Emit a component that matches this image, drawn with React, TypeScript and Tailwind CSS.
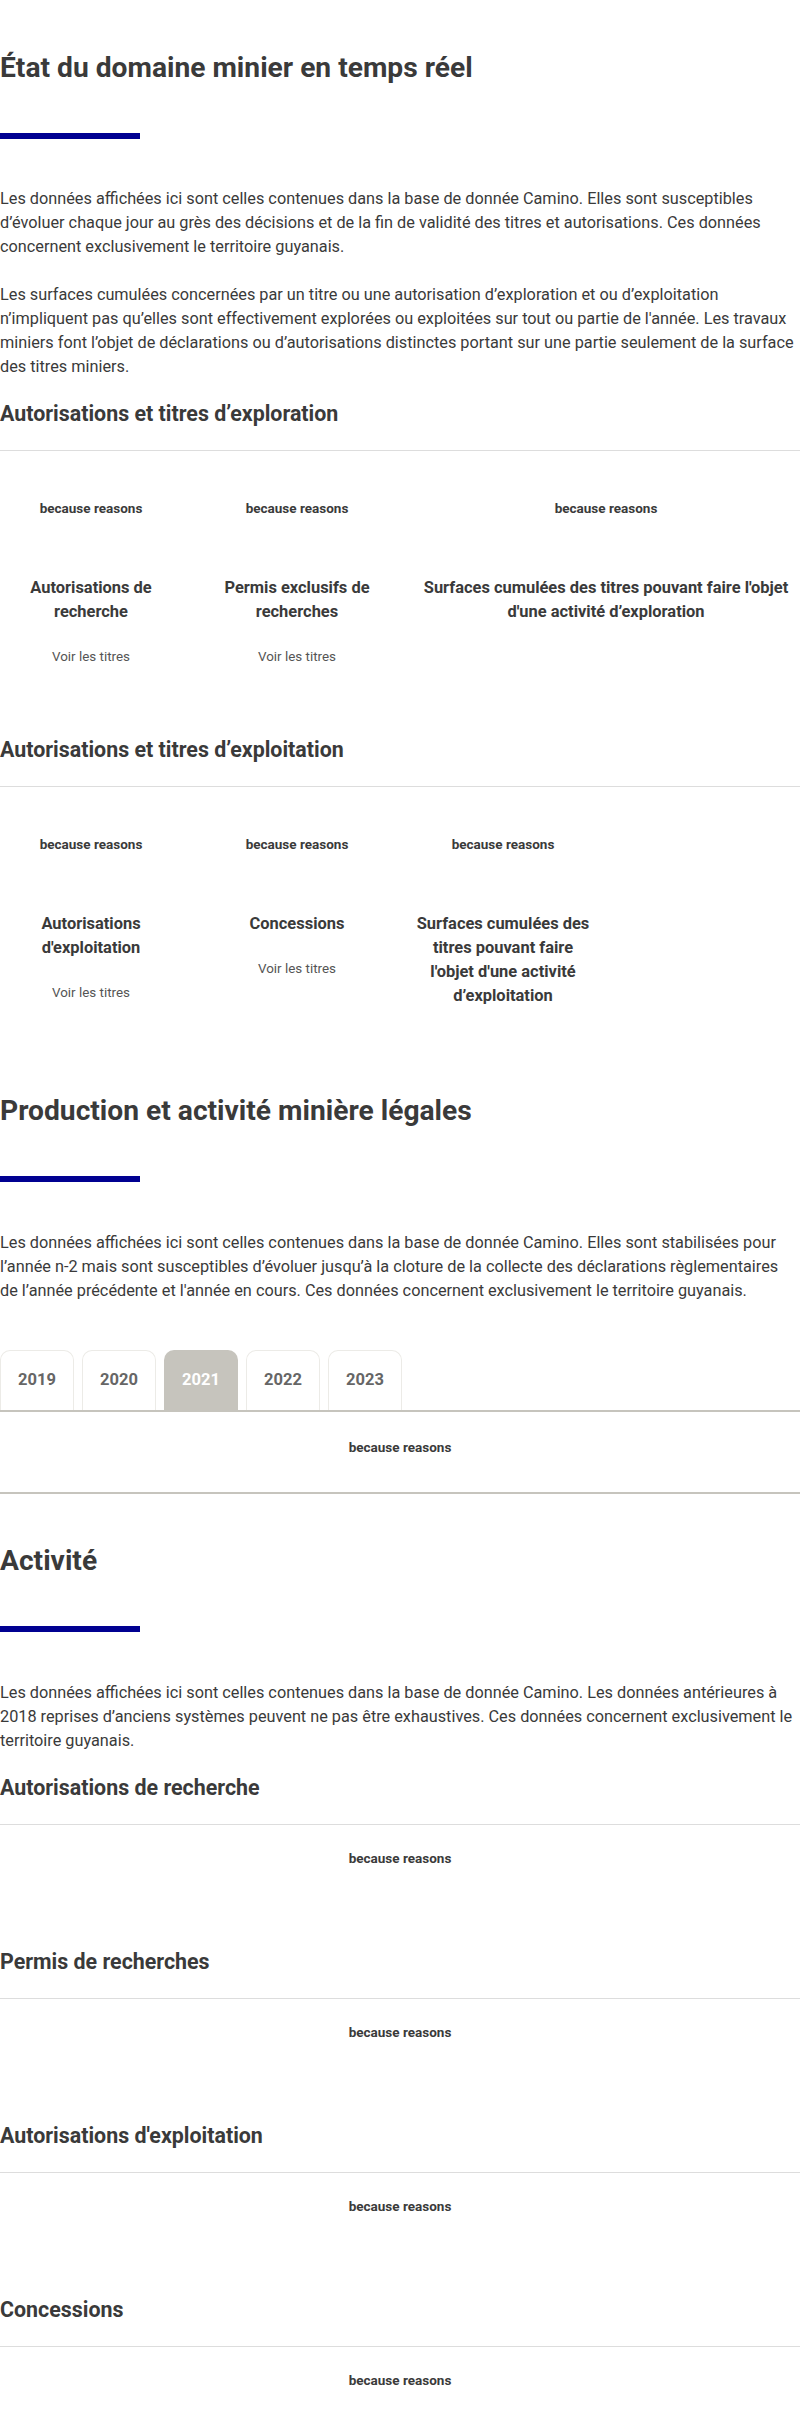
import React from "react";

const Bar = ({ className }: { className: string }) => (
  <div className={`h-[6px] w-[140px] bg-[#000091] ${className}`} />
);

const Rule = () => <div className="mt-[22px] h-px w-full bg-[#dddddd]" />;

const Reasons = ({ className = "" }: { className?: string }) => (
  <p className={`text-[13.5px] leading-[20px] font-bold text-[#3a3a3a] ${className}`}>because reasons</p>
);

type Card = { title: string; link: boolean; span?: boolean };

const Cards = ({ items }: { items: Card[] }) => (
  <div className="mt-[47px] grid grid-cols-4 items-start gap-x-6">
    {items.map((c, i) => (
      <div
        key={i}
        className={`flex flex-col items-center text-center ${c.span ? "col-span-2" : "col-span-1"}`}
      >
        <Reasons />
        <h3 className="mt-[58px] text-[16.45px] leading-[24px] font-bold text-[#3a3a3a]">{c.title}</h3>
        {c.link && (
          <a className="mt-[23px] text-[13.4px] leading-[20px] text-[#555555]">Voir les titres</a>
        )}
      </div>
    ))}
  </div>
);

const ChartBlock = ({ title, className }: { title: string; className: string }) => (
  <section className={className}>
    <h2 className="text-[21.4px] leading-[28px] font-bold text-[#3a3a3a]">{title}</h2>
    <Rule />
    <Reasons className="mt-[23px] text-center" />
  </section>
);

export default function App() {
  const years = ["2019", "2020", "2021", "2022", "2023"];
  return (
    <div className="w-[800px] bg-white pt-[50px] pb-[34px] font-['Roboto','Liberation_Sans',sans-serif] text-[#3a3a3a]">
      <h1 className="text-[28.2px] leading-[36px] font-bold">État du domaine minier en temps réel</h1>
      <Bar className="mt-[47px]" />
      <p className="mt-[48px] text-[16.27px] leading-[24px]">
        Les données affichées ici sont celles contenues dans la base de donnée Camino. Elles sont susceptibles
        <br />
        d’évoluer chaque jour au grès des décisions et de la fin de validité des titres et autorisations. Ces données
        <br />
        concernent exclusivement le territoire guyanais.
      </p>
      <p className="mt-[24px] text-[16.27px] leading-[24px]">
        Les surfaces cumulées concernées par un titre ou une autorisation d’exploration et ou d’exploitation
        <br />
        n’impliquent pas qu’elles sont effectivement explorées ou exploitées sur tout ou partie de l'année. Les travaux
        <br />
        miniers font l’objet de déclarations ou d’autorisations distinctes portant sur une partie seulement de la surface
        <br />
        des titres miniers.
      </p>

      <h2 className="mt-[21px] text-[21.4px] leading-[28px] font-bold">Autorisations et titres d’exploration</h2>
      <Rule />
      <Cards
        items={[
          { title: "Autorisations de recherche", link: true },
          { title: "Permis exclusifs de recherches", link: true },
          {
            title: "Surfaces cumulées des titres pouvant faire l'objet d'une activité d’exploration",
            link: false,
            span: true,
          },
        ]}
      />

      <h2 className="mt-[69px] text-[21.4px] leading-[28px] font-bold">Autorisations et titres d’exploitation</h2>
      <Rule />
      <Cards
        items={[
          { title: "Autorisations d'exploitation", link: true },
          { title: "Concessions", link: true },
          {
            title: "Surfaces cumulées des titres pouvant faire l'objet d'une activité d’exploitation",
            link: false,
          },
        ]}
      />

      <h1 className="mt-[85px] text-[28.2px] leading-[36px] font-bold">Production et activité minière légales</h1>
      <Bar className="mt-[47px]" />
      <p className="mt-[49px] text-[16.27px] leading-[24px]">
        Les données affichées ici sont celles contenues dans la base de donnée Camino. Elles sont stabilisées pour
        <br />
        l’année n-2 mais sont susceptibles d’évoluer jusqu’à la cloture de la collecte des déclarations règlementaires
        <br />
        de l’année précédente et l'année en cours. Ces données concernent exclusivement le territoire guyanais.
      </p>

      <div className="mt-[47px] flex gap-2">
        {years.map((y) => (
          <div
            key={y}
            className={
              y === "2021"
                ? "flex h-[60px] w-[74px] items-center justify-center rounded-t-[10px] bg-[#c6c4bd] text-[16.5px] font-bold text-white"
                : "flex h-[60px] w-[74px] items-center justify-center rounded-t-[10px] border border-b-0 border-[#ecebe7] bg-white text-[16.5px] font-bold text-[#666666]"
            }
          >
            {y}
          </div>
        ))}
      </div>
      <div className="h-[2px] w-full bg-[#c6c4bd]" />
      <div className="pt-[25px] pb-[35px] text-center">
        <Reasons />
      </div>
      <div className="h-[2px] w-full bg-[#c6c4bd]" />

      <h1 className="mt-[49px] text-[28.2px] leading-[36px] font-bold">Activité</h1>
      <Bar className="mt-[47px]" />
      <p className="mt-[49px] text-[16.27px] leading-[24px]">
        Les données affichées ici sont celles contenues dans la base de donnée Camino. Les données antérieures à
        <br />
        2018 reprises d’anciens systèmes peuvent ne pas être exhaustives. Ces données concernent exclusivement le
        <br />
        territoire guyanais.
      </p>

      <ChartBlock title="Autorisations de recherche" className="mt-[21px]" />
      <ChartBlock title="Permis de recherches" className="mt-[80px]" />
      <ChartBlock title="Autorisations d'exploitation" className="mt-[80px]" />
      <ChartBlock title="Concessions" className="mt-[80px]" />
    </div>
  );
}
